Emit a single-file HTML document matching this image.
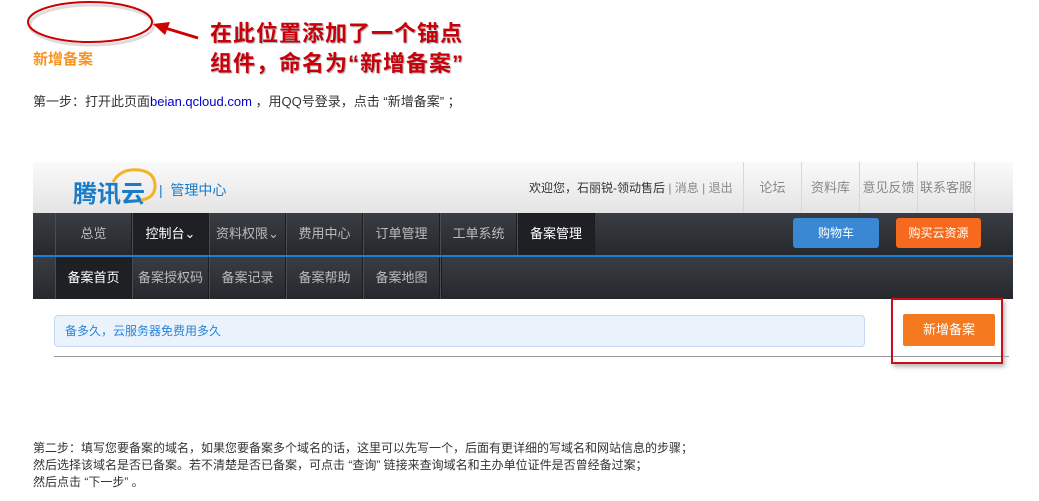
<!DOCTYPE html>
<html><head><meta charset="utf-8"><style>
*{margin:0;padding:0;box-sizing:border-box}
body{width:1039px;height:501px;background:#fff;position:relative;overflow:hidden;font-family:"Liberation Sans","Noto Sans CJK SC",sans-serif;}
.a{position:absolute;white-space:nowrap}
.red{color:#c8000a;font-size:22px;font-weight:bold;letter-spacing:1px;text-shadow:1px 1px 1px #aaa;font-family:"Liberation Sans","Noto Sans CJK SC",sans-serif}
.t{font-size:12px;color:#333;line-height:17px}
.nav div,.sub div{position:absolute;top:0;height:42px;line-height:42px;text-align:center;color:#bbb;font-size:13px;border-left:1px solid #4a4e54;border-right:1px solid #1a1c1f}
.hl{font-size:13px;color:#888}
</style></head><body>
<svg class="a" style="left:0;top:0" width="210" height="50">
<ellipse cx="92" cy="25" rx="62" ry="20" fill="none" stroke="#ddd" stroke-width="3"/>
<ellipse cx="90" cy="22" rx="62" ry="20" fill="none" stroke="#c00" stroke-width="2"/>
<line x1="198" y1="38" x2="165" y2="28" stroke="#c00" stroke-width="3"/>
<polygon points="153,24 170,22 165,35" fill="#c00"/>
</svg>
<div class="a" style="left:33px;top:48px;color:#f7931e;font-size:15px;font-weight:bold">新增备案</div>
<div class="a red" style="left:210px;top:16px">在此位置添加了一个锚点</div>
<div class="a red" style="left:210px;top:46px">组件，命名为“新增备案”</div>
<div class="a t" style="left:33px;top:93px;font-size:13px">第一步：打开此页面<span style="color:#00c">beian.qcloud.com</span> ，用QQ号登录，点击 “新增备案” ；</div>

<div class="a" style="left:33px;top:162px;width:980px;height:51px;background:linear-gradient(#fafafa,#e4e4e4)">
 <div class="a" style="left:40px;top:12px;font-size:24px;font-weight:bold;color:#1a7bc8">腾讯云</div>
 <svg class="a" style="left:76px;top:4px" width="54" height="38"><path d="M4 16 Q12 2 30 4 Q46 6 46 20 Q46 32 32 34" fill="none" stroke="#f5b324" stroke-width="3"/></svg>
 <div class="a" style="left:126px;top:18px;color:#1a7bc8;font-size:14px">|&nbsp; 管理中心</div>
 <div class="a" style="left:496px;top:17px;font-size:12px;color:#333">欢迎您，石丽锐-领动售后 <span class="hl" style="font-size:12px">| 消息 | 退出</span></div>
 <div class="a" style="left:710px;top:0;width:58px;height:51px;border-left:1px solid #d8d8d8;line-height:51px;text-align:center"><span class="hl">论坛</span></div>
 <div class="a" style="left:768px;top:0;width:58px;height:51px;border-left:1px solid #d8d8d8;line-height:51px;text-align:center"><span class="hl">资料库</span></div>
 <div class="a" style="left:826px;top:0;width:58px;height:51px;border-left:1px solid #d8d8d8;line-height:51px;text-align:center"><span class="hl">意见反馈</span></div>
 <div class="a" style="left:884px;top:0;width:58px;height:51px;border-left:1px solid #d8d8d8;border-right:1px solid #d8d8d8;line-height:51px;text-align:center"><span class="hl">联系客服</span></div>
</div>
<div class="a nav" style="left:33px;top:213px;width:980px;height:42px;background:linear-gradient(#3a3e44,#25282c)">
 <div style="left:22px;width:77px">总览</div>
 <div style="left:99px;width:77px;background:#1e2024;color:#fff">控制台⌄</div>
 <div style="left:176px;width:77px">资料权限⌄</div>
 <div style="left:253px;width:77px">费用中心</div>
 <div style="left:330px;width:77px">订单管理</div>
 <div style="left:407px;width:77px">工单系统</div>
 <div style="left:484px;width:78px;background:#1e2024;color:#fff">备案管理</div>
 <div class="a" style="left:760px;top:5px;width:86px;height:30px;line-height:30px;background:#3a87d4;border-radius:3px;color:#fff;font-size:12px;border:none">购物车</div>
 <div class="a" style="left:863px;top:5px;width:85px;height:30px;line-height:30px;background:#f56a1e;border-radius:3px;color:#fff;font-size:12px;border:none">购买云资源</div>
</div>
<div class="a" style="left:33px;top:255px;width:980px;height:2px;background:#1a7fd6"></div>
<div class="a sub" style="left:33px;top:257px;width:980px;height:42px;background:linear-gradient(#3a3e44,#25282c)">
 <div style="left:22px;width:77px;background:#1e2024;color:#fff">备案首页</div>
 <div style="left:99px;width:77px">备案授权码</div>
 <div style="left:176px;width:77px">备案记录</div>
 <div style="left:253px;width:77px">备案帮助</div>
 <div style="left:330px;width:77px">备案地图</div>
 <div style="left:407px;width:1px"></div>
</div>
<div class="a" style="left:54px;top:315px;width:811px;height:32px;background:#eaf2fc;border:1px solid #c6d8f0;border-radius:4px;color:#2b84d6;font-size:12px;line-height:30px;padding-left:10px">备多久，云服务器免费用多久</div>
<div class="a" style="left:54px;top:356px;width:955px;height:1px;background:#999"></div>
<div class="a" style="left:891px;top:298px;width:112px;height:66px;border:2px solid #c8101a;box-shadow:2px 3px 4px #bbb"></div>
<div class="a" style="left:903px;top:314px;width:92px;height:32px;background:#f57a1f;border-radius:2px;color:#fff;font-size:13px;text-align:center;line-height:32px">新增备案</div>

<div class="a t" style="left:33px;top:440px">第二步：填写您要备案的域名，如果您要备案多个域名的话，这里可以先写一个，后面有更详细的写域名和网站信息的步骤；<br>然后选择该域名是否已备案。若不清楚是否已备案，可点击 “查询” 链接来查询域名和主办单位证件是否曾经备过案；<br>然后点击 “下一步” 。</div>
</body></html>
